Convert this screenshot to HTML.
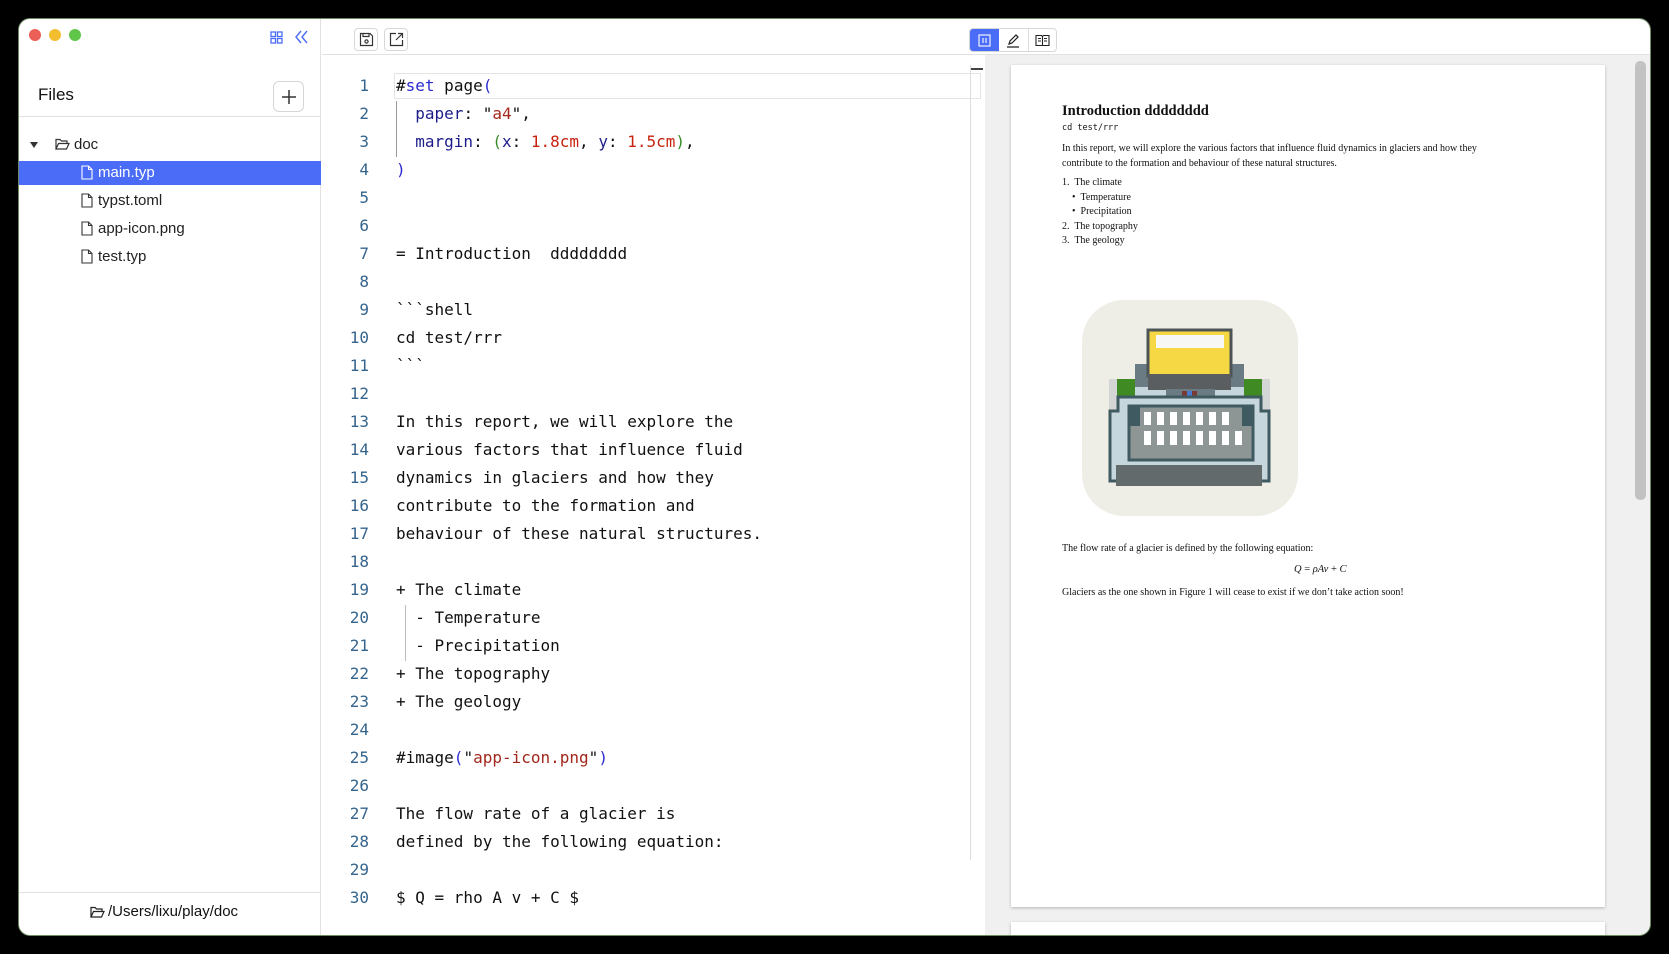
<!DOCTYPE html>
<html><head><meta charset="utf-8"><style>
*{margin:0;padding:0;box-sizing:border-box}
body{width:1669px;height:954px;background:#000;position:relative;overflow:hidden;font-family:"Liberation Sans",sans-serif}
.win{position:absolute;left:19px;top:19px;width:1631px;height:916px;background:#fff;border-radius:11px;overflow:hidden;box-shadow:0 0 0 1px #6d8a62}
.side{position:absolute;left:0;top:0;width:302px;height:916px;border-right:1px solid #e2e2e2;background:#fff}
.dot{position:absolute;top:10px;width:12px;height:12px;border-radius:50%}
.abs{position:absolute}
.row{position:absolute;left:0;width:302px;height:24px;font-size:15px;color:#222;line-height:24px}
.row svg{position:absolute;left:62px;top:4px}
.row span{position:absolute;left:79px}
.mono{font-family:"DejaVu Sans Mono",monospace}
.ln{position:absolute;left:300px;width:50px;text-align:right;font-size:16px;color:#35648c;line-height:28px}
.code{position:absolute;left:377px;font-size:16px;line-height:28px;color:#111;white-space:pre}
.k{color:#2b2bd0}.v{color:#1c1c8a}.s{color:#a3271c}.n{color:#c8230f}.g{color:#3a8c2a}
.btn{position:absolute;width:24px;height:23px;border:1px solid #d8d8d8;border-radius:4px;background:#fff}
.pg{position:absolute;background:#fff;box-shadow:0 1px 3px rgba(0,0,0,.25)}
.serif{font-family:"Liberation Serif",serif;color:#111}
</style></head><body>
<div class="win">
 <div class="side">
  <div class="dot" style="left:10px;background:#ec5f57"></div>
  <div class="dot" style="left:30px;background:#f2bd2f"></div>
  <div class="dot" style="left:50px;background:#5fc64a"></div>
  <svg class="abs" style="left:251px;top:12px" width="13" height="13" viewBox="0 0 13 13" fill="none" stroke="#4a6cf7" stroke-width="1.3"><rect x="1" y="1" width="4.5" height="4.5"/><rect x="7.5" y="1" width="4.5" height="4.5"/><rect x="1" y="7.5" width="4.5" height="4.5"/><rect x="7.5" y="7.5" width="4.5" height="4.5"/></svg>
  <svg class="abs" style="left:276px;top:11px" width="13" height="14" viewBox="0 0 13 14" fill="none" stroke="#4a6cf7" stroke-width="1.4"><path d="M6 1L1 7l5 6M12 1L7 7l5 6"/></svg>
  <div class="abs" style="left:19px;top:66px;font-size:17px;color:#111">Files</div>
  <div class="abs" style="left:254px;top:62px;width:31px;height:31px;border:1px solid #d6d6d6;border-radius:6px;background:#fff"><svg style="position:absolute;left:7px;top:7px" width="16" height="16" viewBox="0 0 16 16" stroke="#333" stroke-width="1.5"><path d="M8 1v14M1 8h14"/></svg></div>
  <div class="abs" style="left:0;top:97px;width:302px;border-top:1px solid #e0e0e0"></div>
  <div class="row" style="top:114px"><svg style="left:11px;top:9px" width="8" height="6" viewBox="0 0 8 6"><path d="M0 0h8L4 6z" fill="#333"/></svg><svg style="left:36px;top:5px" width="15" height="13" viewBox="0 0 15 13" fill="none" stroke="#333" stroke-width="1.2"><path d="M1 11V1.5h4l1.5 1.5H12v2.5M1 11l2.5-5.5H14L11.5 11z"/></svg><span style="left:55px">doc</span></div>
  <div class="row" style="top:142px;background:#4a6cf7;color:#fff"><svg width="12" height="15" viewBox="0 0 12 15" fill="none" stroke="#fff" stroke-width="1.1"><path d="M1 1h6.5L11 4.5V14H1z M7.5 1v3.5H11"/></svg><span>main.typ</span></div>
  <div class="row" style="top:170px"><svg width="12" height="15" viewBox="0 0 12 15" fill="none" stroke="#333" stroke-width="1.1"><path d="M1 1h6.5L11 4.5V14H1z M7.5 1v3.5H11"/></svg><span>typst.toml</span></div>
  <div class="row" style="top:198px"><svg width="12" height="15" viewBox="0 0 12 15" fill="none" stroke="#333" stroke-width="1.1"><path d="M1 1h6.5L11 4.5V14H1z M7.5 1v3.5H11"/></svg><span>app-icon.png</span></div>
  <div class="row" style="top:226px"><svg width="12" height="15" viewBox="0 0 12 15" fill="none" stroke="#333" stroke-width="1.1"><path d="M1 1h6.5L11 4.5V14H1z M7.5 1v3.5H11"/></svg><span>test.typ</span></div>
  <div class="abs" style="left:0;top:873px;width:302px;border-top:1px solid #e0e0e0"></div>
  <svg class="abs" style="left:71px;top:887px" width="15" height="13" viewBox="0 0 15 13" fill="none" stroke="#222" stroke-width="1.2"><path d="M1 11V1.5h4l1.5 1.5H12v2.5M1 11l2.5-5.5H14L11.5 11z"/></svg>
  <div class="abs" style="left:89px;top:884px;font-size:15px;color:#111">/Users/lixu/play/doc</div>
 </div>
 <div class="abs" style="left:303px;top:35px;width:1328px;border-top:1px solid #e2e2e2"></div>
 <div class="btn" style="left:335px;top:9px"><svg style="position:absolute;left:4px;top:3px" width="15" height="15" viewBox="0 0 15 15" fill="none" stroke="#333" stroke-width="1.2"><path d="M1.5 1.5h9.5l2.5 2.5v9.5h-12z M4 1.5v3h6v-3"/><circle cx="7.5" cy="9.5" r="1.6"/></svg></div>
 <div class="btn" style="left:365px;top:9px"><svg style="position:absolute;left:4px;top:3px" width="15" height="15" viewBox="0 0 15 15" fill="none" stroke="#333" stroke-width="1.2"><path d="M7 1.5H1.5v12h12V8 M9 1.5h4.5V6 M13.5 1.5L7 8"/></svg></div>
 <div class="abs" style="left:375px;top:54px;width:587px;height:26px;border:1px solid #e4e4e4"></div>
 <div class="abs" style="left:377px;top:82px;height:56px;border-left:1px solid #999"></div>
 <div class="abs" style="left:386px;top:586px;height:56px;border-left:1px solid #bbb"></div>
 <div class="abs" style="left:951px;top:46px;height:795px;border-left:1px solid #ddd"></div>
 <div class="abs" style="left:952px;top:49px;width:12px;height:2px;background:#444"></div>
 <div class="ln mono" style="top:53px">1<br>2<br>3<br>4<br>5<br>6<br>7<br>8<br>9<br>10<br>11<br>12<br>13<br>14<br>15<br>16<br>17<br>18<br>19<br>20<br>21<br>22<br>23<br>24<br>25<br>26<br>27<br>28<br>29<br>30</div>
 <div class="code mono" style="top:53px">#<span class="k">set</span> page<span class="k">(</span>
  <span class="v">paper</span>: "<span class="s">a4</span>",
  <span class="v">margin</span>: <span class="g">(</span><span class="v">x</span>: <span class="n">1.8cm</span>, <span class="v">y</span>: <span class="n">1.5cm</span><span class="g">)</span>,
<span class="k">)</span>


= Introduction  dddddddd

&#96;&#96;&#96;shell
cd test/rrr
&#96;&#96;&#96;

In this report, we will explore the
various factors that influence fluid
dynamics in glaciers and how they
contribute to the formation and
behaviour of these natural structures.

+ The climate
  - Temperature
  - Precipitation
+ The topography
+ The geology

#image<span class="k">(</span>"<span class="s">app-icon.png</span>"<span class="k">)</span>

The flow rate of a glacier is
defined by the following equation:

$ Q = rho A v + C $</div>
 <div class="abs" style="left:966px;top:36px;width:665px;height:880px;background:#f0f0f0"></div>
 <div class="abs" style="left:950px;top:9px;width:88px;height:24px;border:1px solid #d8d8d8;border-radius:4px;background:#fff;overflow:hidden">
  <div class="abs" style="left:0;top:0;width:29px;height:24px;background:#4a6cf7"><svg style="position:absolute;left:8px;top:5px" width="13" height="13" viewBox="0 0 13 13" fill="none" stroke="#fff" stroke-width="1.1"><rect x="1" y="1" width="11" height="11"/><path d="M5 4v5M8 4v5"/></svg></div>
  <svg class="abs" style="left:36px;top:5px" width="14" height="14" viewBox="0 0 14 14" fill="none" stroke="#222" stroke-width="1.2"><path d="M3 10l1-3 6-6 2 2-6 6zM1 13h12"/></svg>
  <div class="abs" style="left:58px;top:0;height:24px;border-left:1px solid #ddd"></div>
  <svg class="abs" style="left:65px;top:5px" width="15" height="13" viewBox="0 0 15 13" fill="none" stroke="#222" stroke-width="1.1"><path d="M1 1.5h5.5l1 1 1-1H14v10H1zM7.5 2.5v9M3 4.5h3M3 7h3M9 4.5h3M9 7h3"/></svg>
 </div>
 <div class="abs" style="left:1616px;top:42px;width:11px;height:439px;background:#c2c2c2;border-radius:5px"></div>
 <div class="pg" style="left:992px;top:46px;width:594px;height:842px">
  <div class="abs serif" style="left:51px;top:38px;font-size:14.5px;font-weight:bold">Introduction dddddddd</div>
  <div class="abs mono" style="left:51px;top:58px;font-size:8.5px;color:#111">cd test/rrr</div>
  <div class="abs serif" style="left:51px;top:76px;font-size:10px;line-height:15px;width:440px">In this report, we will explore the various factors that influence fluid dynamics in glaciers and how they contribute to the formation and behaviour of these natural structures.</div>
  <div class="abs serif" style="left:51px;top:111px;font-size:10px;line-height:14.5px">1.&nbsp; The climate<br>&nbsp;&nbsp;&nbsp;&nbsp;• &nbsp;Temperature<br>&nbsp;&nbsp;&nbsp;&nbsp;• &nbsp;Precipitation<br>2.&nbsp; The topography<br>3.&nbsp; The geology</div>
  <svg class="abs" style="left:71px;top:235px" width="216" height="216" viewBox="0 0 216 216">
   <rect x="0" y="0" width="216" height="216" rx="42" fill="#efeee6"/>
   <rect x="27" y="79" width="8" height="40" fill="#d4d6d6"/><rect x="180" y="79" width="8" height="40" fill="#d4d6d6"/>
   <rect x="53" y="64" width="109" height="24" fill="#6b7b84"/>
   <rect x="35" y="79" width="18" height="18" fill="#3f8a23"/><rect x="162" y="79" width="18" height="18" fill="#3f8a23"/>
   <rect x="53" y="87" width="109" height="12" fill="#c5d6dc"/>
   <rect x="66" y="30" width="83" height="46" fill="#f6d844" stroke="#4d5456" stroke-width="3"/>
   <rect x="74" y="35" width="68" height="13" fill="#f7f7f5"/>
   <rect x="66" y="74" width="83" height="16" fill="#5a5e60"/>
   <rect x="84" y="89" width="49" height="9" fill="#6b7b84"/>
   <rect x="100" y="91" width="5" height="5" fill="#7a3a32"/><rect x="105" y="91" width="5" height="5" fill="#4a7ad0"/><rect x="110" y="91" width="5" height="5" fill="#7a3a32"/>
   <path d="M36 97h143v14h8v70H28v-70h8z" fill="#c5d6dc" stroke="#3f5b61" stroke-width="3"/>
   <rect x="47" y="106" width="124" height="54" fill="#8e9595" stroke="#3f5b61" stroke-width="3"/>
   <rect x="46" y="105" width="12" height="21" fill="#3f5b61"/><rect x="160" y="105" width="12" height="21" fill="#3f5b61"/>
   <g fill="#fff"><rect x="62" y="112" width="7" height="13"/><rect x="75" y="112" width="7" height="13"/><rect x="88" y="112" width="7" height="13"/><rect x="101" y="112" width="7" height="13"/><rect x="114" y="112" width="7" height="13"/><rect x="127" y="112" width="7" height="13"/><rect x="140" y="112" width="7" height="13"/>
   <rect x="62" y="131" width="7" height="14"/><rect x="75" y="131" width="7" height="14"/><rect x="88" y="131" width="7" height="14"/><rect x="101" y="131" width="7" height="14"/><rect x="114" y="131" width="7" height="14"/><rect x="127" y="131" width="7" height="14"/><rect x="140" y="131" width="7" height="14"/><rect x="153" y="131" width="7" height="14"/></g>
   <rect x="34" y="165" width="146" height="21" fill="#626a6b"/>
  </svg>
  <div class="abs serif" style="left:51px;top:478px;font-size:10px">The flow rate of a glacier is defined by the following equation:</div>
  <div class="abs serif" style="left:283px;top:499px;font-size:10.5px;font-style:italic">Q <span style="font-style:normal">=</span> ρAv <span style="font-style:normal">+</span> C</div>
  <div class="abs serif" style="left:51px;top:522px;font-size:10px">Glaciers as the one shown in Figure 1 will cease to exist if we don’t take action soon!</div>
 </div>
 <div class="pg" style="left:992px;top:903px;width:594px;height:40px"></div>
</div>
</body></html>
